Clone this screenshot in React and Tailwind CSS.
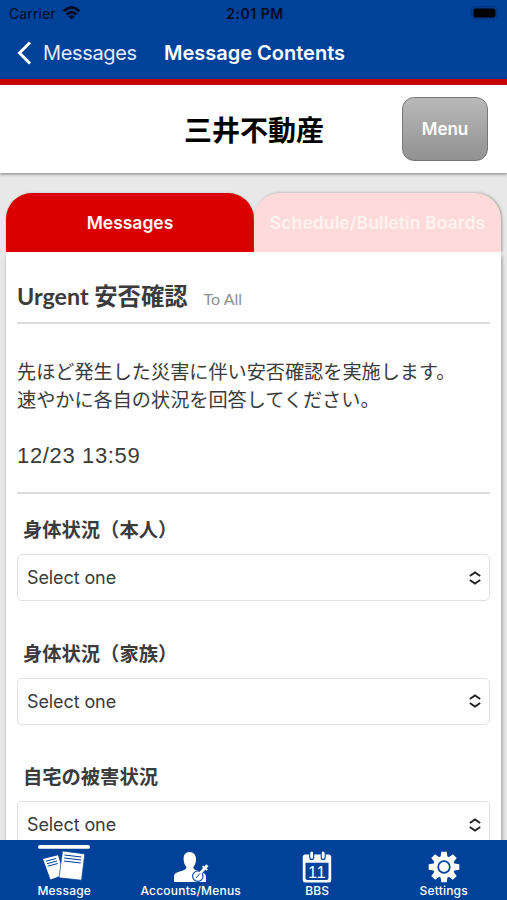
import React from "react";

const fields = ["身体状況（本人）", "身体状況（家族）", "自宅の被害状況"];

const WifiIcon = () => (
    <svg width="19" height="14" viewBox="0 0 18 14" fill="none" stroke="#000b24" strokeWidth="2.9" className="ml-[6px] -mt-[2px]">
        <path d="M1 5.2Q9-2.2 17 5.2"/>
        <path d="M4 8.5Q9 4.2 14 8.5"/>
        <path d="M9 13.6 5.9 10.5Q9 8 12.1 10.5Z" fill="#000b24" stroke="none"/>
    </svg>
);

const BatteryIcon = () => (
    <svg width="30" height="14" viewBox="0 0 30 14" className="-mt-[1px]">
        <rect x=".6" y=".6" width="25.4" height="12.4" rx="3.6" fill="none" stroke="#06317c" strokeWidth="1.2"/>
        <rect x="2.4" y="2.4" width="22" height="9" rx="2" fill="#000"/>
        <path d="M27.6 4.8q1.6 2 0 4z" fill="#06317c"/>
    </svg>
);

const MessageIcon = () => (
    <svg width="52" height="38" viewBox="0 0 52 38">
        <rect x="0" y="0" width="52" height="3.8" rx="1.9" fill="#fff"/>
        <path d="M5 14 20 10.2 26 29.5 12.5 34.5Z" fill="#fff"/>
        <g stroke="#00419a" strokeWidth="1">
            <path d="M8 16.2 18 13.5M9 18.7 19 16M9.8 21.2 19.8 18.5"/>
        </g>
        <path d="M24.5 6 46.8 8.9 43.5 35.2 21 32.8Z" fill="#fff" stroke="#00419a" strokeWidth=".7"/>
        <g stroke="#00419a" strokeWidth="1.2">
            <path d="M26.5 10 43.5 12M26.2 13 43.2 15M25.8 16 42.8 18"/>
        </g>
    </svg>
);

const AccountIcon = () => (
    <svg width="36" height="32" viewBox="0 0 36 32">
        <path
            d="M16.5 1C12.5 1 10.5 4 10.6 8c.1 3.5 1.2 6.5 2.8 8-.1 2-1 2.6-3 3.3C5 21.2 1 21.5 1 26v5h32v-5c0-4.5-4.5-5-10-6.8-1.7-.6-2.6-1.3-2.7-3.2 1.8-1.7 2.7-4.7 2.7-8C23 4 20.5 1 16.5 1Z"
            fill="#fff"/>
        <circle cx="24.8" cy="25.2" r="5.2" fill="#fff" stroke="#00419a" strokeWidth="1.1"/>
        <path d="m27.8 21.5 6.4-7.3" stroke="#00419a" strokeWidth="4.6"/>
        <path d="m26 23.6 8.4-9.4" stroke="#fff" strokeWidth="2.8"/>
        <path d="m29.6 15.2 4.6 3.9" stroke="#fff" strokeWidth="2"/>
        <path d="m23.2 26.8 3.8-4.4" stroke="#00419a" strokeWidth="1"/>
    </svg>
);

const CalendarIcon = () => (
    <svg width="30" height="32" viewBox="0 0 30 32">
        <rect x=".8" y="3.5" width="28.4" height="28" rx="2.5" fill="#fff"/>
        <path d="M3.5 11.7h23V27q0 2-2 2h-19q-2 0-2-2z" fill="#00419a"/>
        <rect x="7.7" y="0" width="4" height="8.4" rx="2" fill="#fff" stroke="#00419a" strokeWidth="1.1"/>
        <rect x="19.2" y="0" width="4" height="8.4" rx="2" fill="#fff" stroke="#00419a" strokeWidth="1.1"/>
        <text x="15" y="26.5" textAnchor="middle" fontSize="16.5" fill="#fff" fontFamily="Liberation Sans, sans-serif" letterSpacing=".4">11</text>
    </svg>
);

const GearIcon = () => (
    <svg width="32" height="32" viewBox="-16 -16 32 32">
        {[0, 45, 90, 135].map((angle) => (
            <path key={angle} d="M-2.7-15.3h5.4l.7 5v20.6l-.7 5h-5.4l-.7-5v-20.6z" fill="#fff" transform={`rotate(${angle})`}/>
        ))}
        <circle r="10.9" fill="#fff"/>
        <circle r="5.8" fill="#fff" stroke="#00419a" strokeWidth="1.7"/>
    </svg>
);

const SelectField = ({label}) => (
    <div className="h-[123.5px]">
        <h3 className="pl-[6px] pt-[0.4px] h-[37px] leading-[26px] text-[19.3px] font-bold">{label}</h3>
        <button
            className="flex items-center justify-between w-full h-[47px] pl-[9px] pr-[7px] border-[1.5px] border-[#e2e2e2] rounded-[5px] bg-white">
            <span className="font-[Inter,sans-serif] text-[18px] tracking-[-0.1px]">Select one</span>
            <svg width="14" height="14" viewBox="0 0 14 14" fill="none" stroke="#222" strokeWidth="1.8">
                <path d="M1.8 5 7 1.4 12.2 5M1.8 9 7 12.6 12.2 9"/>
            </svg>
        </button>
    </div>
);

const NavItem = ({label, children}) => (
    <div className="flex-1 flex flex-col items-center">
        <div className="h-[43px] flex items-end justify-center">{children}</div>
        <span className="text-[12px] leading-[15px] font-medium tracking-[0.2px] whitespace-nowrap">{label}</span>
    </div>
);

const App = () => {
    return (
        <div
            className="w-[507px] h-[900px] flex flex-col overflow-hidden bg-[#e8e8e8] text-[#3b3b3b] font-[Lato,'Noto_Sans_CJK_JP',sans-serif]">
            <header className="shrink-0 h-[85px] bg-[#00419a] border-b-[6px] border-[#cb0000] font-[Inter,sans-serif]">
                <div className="grid grid-cols-3 items-center h-[27px] pl-[9px] pr-[6px] text-[#000b24]">
                    <div className="flex items-center text-[14px] tracking-[0.1px]">Carrier<WifiIcon/></div>
                    <div className="text-center text-[14px] font-semibold tracking-[0.5px]">2:01 PM</div>
                    <div className="flex justify-end"><BatteryIcon/></div>
                </div>
                <div className="flex items-center h-[51px] pl-[17px] text-white">
                    <svg width="15" height="24" viewBox="0 0 15 24" fill="none" stroke="#fff" strokeWidth="3">
                        <path d="M13 1.5 2.5 12 13 22.5"/>
                    </svg>
                    <span className="ml-[11px] w-[121px] text-[20px] tracking-[-0.35px] text-[#e3edff]">Messages</span>
                    <h1 className="text-[20px] font-semibold whitespace-nowrap">Message Contents</h1>
                </div>
            </header>

            <section
                className="shrink-0 h-[88px] bg-white flex items-center pr-[19px] shadow-[0_1px_3px_#777]">
                <h2 className="flex-1 pl-[106px] pt-px text-center text-[28px] font-bold text-black">三井不動産</h2>
                <button
                    className="w-[86px] h-[64px] pt-[2px] rounded-[12px] border border-[#777] bg-linear-to-b from-[#b9b9b9] to-[#929292] text-white font-[Inter,sans-serif] text-[17px] font-semibold">
                    Menu
                </button>
            </section>

            <main className="flex-1 min-h-0 overflow-hidden mt-[10px] pt-[10px] px-[6px]">
                <div className="flex h-[59px] font-[Inter,sans-serif] font-semibold text-[17.5px] text-white whitespace-nowrap">
                    <div className="w-[248px] pt-[2px] flex items-center justify-center rounded-t-[26px] bg-[#d90000] shadow-[0_0_2px_#aaa]">Messages</div>
                    <div className="w-[247px] pt-px flex items-center justify-center rounded-t-[26px] bg-[#ffdada] text-[#fff3f1] tracking-[0.1px] shadow-[1px_0_3px_#999]">Schedule/Bulletin Boards</div>
                </div>
                <div className="relative min-h-[640px] px-[11px] bg-white shadow-[1px_4px_4px_#999]">
                    <div className="h-[72px] pt-[27px] flex items-baseline border-b-2 border-[#dcdcdc]">
                        <h2 className="text-[23.3px] leading-[34px] font-bold">Urgent 安否確認</h2>
                        <span className="ml-[16px] text-[16px] text-[#909090]">To All</span>
                    </div>
                    <div className="h-[170px] pt-[34px] border-b-2 border-[#dcdcdc] text-[19.15px] leading-[28px]">
                        <p>先ほど発生した災害に伴い安否確認を実施します。</p>
                        <p>速やかに各自の状況を回答してください。</p>
                        <p className="mt-[28px] font-['Liberation_Sans',sans-serif] text-[22px] tracking-[0.65px]">12/23 13:59</p>
                    </div>
                    <div className="pt-[23px]">
                        {fields.map((label) => <SelectField key={label} label={label}/>)}
                    </div>
                </div>
            </main>

            <nav className="shrink-0 h-[60px] pl-[1px] flex bg-[#00419a] text-white font-[Inter,sans-serif]">
                <NavItem label="Message"><MessageIcon/></NavItem>
                <NavItem label="Accounts/Menus"><AccountIcon/></NavItem>
                <NavItem label="BBS"><CalendarIcon/></NavItem>
                <NavItem label="Settings"><GearIcon/></NavItem>
            </nav>
        </div>
    );
};

export default App;
